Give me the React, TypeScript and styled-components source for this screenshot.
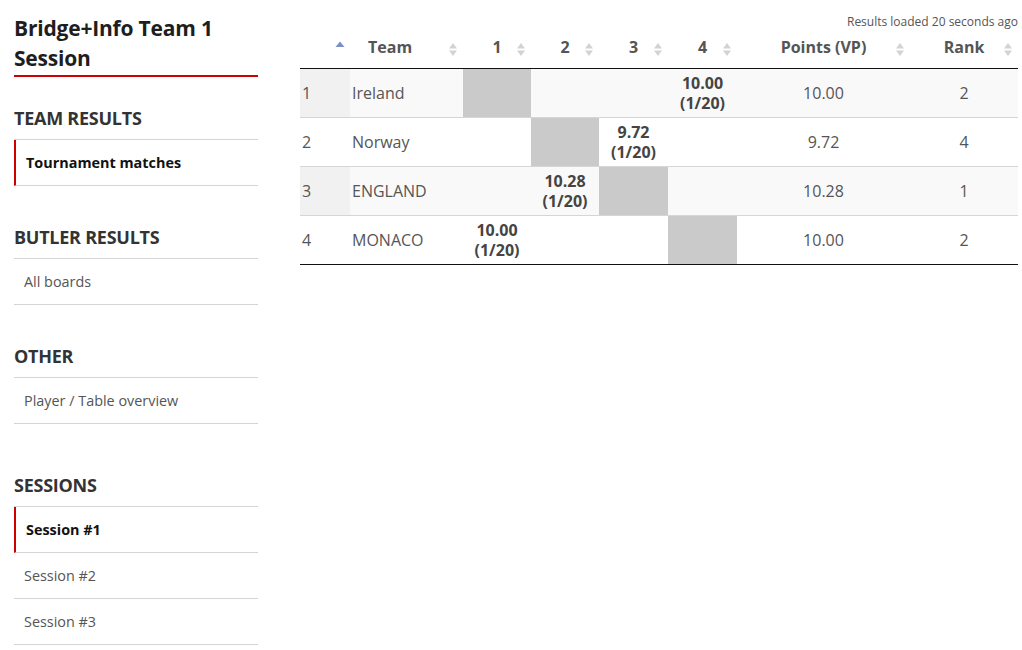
import React from "react";
import styled, { createGlobalStyle } from "styled-components";

const GlobalStyle = createGlobalStyle`
  html, body { margin: 0; padding: 0; background: #fff; }
  body { font-family: "Open Sans", "Liberation Sans", sans-serif; color: #555; }
  * { box-sizing: border-box; }
`;

const Page = styled.div`
  display: flex;
  align-items: flex-start;
  gap: 42px;
  padding: 0 4px 0 14px;
  width: 1022px;
`;

const Sidebar = styled.aside`
  width: 244px;
  flex: none;
  display: flex;
  flex-direction: column;
`;

const Title = styled.h1`
  margin: 13px 0 0;
  padding-bottom: 2px;
  font-size: 21px;
  line-height: 30px;
  font-weight: 700;
  color: #1e1e1e;
  letter-spacing: -0.2px;
  border-bottom: 2px solid #cc0000;
`;

const Section = styled.section<{ $extra?: number }>`
  margin-top: ${(p) => 38 + (p.$extra ?? 0)}px;
  &:first-of-type { margin-top: 28px; }
`;

const SectionHeading = styled.h2`
  margin: 0;
  height: 34px;
  font-size: 18px;
  line-height: 26px;
  font-weight: 700;
  color: #333;
  letter-spacing: -0.25px;
  text-transform: uppercase;
`;

const NavList = styled.ul`
  list-style: none;
  margin: 0;
  padding: 0;
  border-top: 1px solid #d4d4d4;
`;

const NavItem = styled.li<{ $active?: boolean }>`
  padding: 12px 10px;
  font-size: 14.4px;
  line-height: 21px;
  border-bottom: 1px solid #d4d4d4;
  border-left: ${(p) => (p.$active ? "2px solid #cc0000" : "none")};
  font-weight: ${(p) => (p.$active ? 700 : 400)};
  color: ${(p) => (p.$active ? "#111" : "#555")};
`;

const Main = styled.main`
  flex: 1;
  padding-top: 13px;
`;

const Loaded = styled.div`
  text-align: right;
  font-size: 12px;
  line-height: 18px;
  color: #555;
  margin-bottom: 1px;
`;

const Table = styled.table`
  width: 718px;
  table-layout: fixed;
  border-collapse: collapse;
  font-size: 16px;
`;

const Th = styled.th<{ $align?: string }>`
  position: relative;
  padding: 4px 8px 10px;
  padding-left: ${(p) => (p.$align === "left" ? "18px" : "8px")};
  text-align: ${(p) => p.$align ?? "center"};
  font-weight: 700;
  line-height: 22px;
  color: #555;
  border-bottom: 1px solid #111;
`;

const SortIcon = styled.svg`
  position: absolute;
  right: 5px;
  top: 9px;
`;

const Row = styled.tr<{ $odd: boolean }>`
  background: ${(p) => (p.$odd ? "#f9f9f9" : "#fff")};
  border-bottom: 1px solid #d6d6d6;
  &:last-child { border-bottom: 1px solid #111; }
`;

const Td = styled.td<{ $align?: string; $kind?: "self" | "score" }>`
  padding: 4px 2px;
  height: 48px;
  line-height: 20px;
  vertical-align: middle;
  text-align: ${(p) => p.$align ?? "center"};
  color: #555;
  ${(p) => p.$kind === "self" && `background: #cacaca;`}
  ${(p) => p.$kind === "score" && `font-weight: 700; color: #444;`}
`;

const IndexTd = styled(Td)<{ $odd: boolean }>`
  background: ${(p) => (p.$odd ? "#f1f1f1" : "#fff")};
`;

const SortBoth = () => (
  <SortIcon width="10" height="16" viewBox="0 0 10 16">
    <path d="M1 7.5 L5 2 L9 7.5 Z" fill="#d3d3d3" />
    <path d="M1 9.5 L5 15 L9 9.5 Z" fill="#d3d3d3" />
  </SortIcon>
);

const SortAsc = () => (
  <SortIcon width="10" height="16" viewBox="0 0 10 16">
    <path d="M0.5 6 L5 0.5 L9.5 6 Z" fill="#7a91c4" />
  </SortIcon>
);

type Team = { name: string; scores: (string | null)[]; vp: string; rank: number };

const teams: Team[] = [
  { name: "Ireland", scores: [null, "", "", "10.00|(1/20)"], vp: "10.00", rank: 2 },
  { name: "Norway", scores: ["", null, "9.72|(1/20)", ""], vp: "9.72", rank: 4 },
  { name: "ENGLAND", scores: ["", "10.28|(1/20)", null, ""], vp: "10.28", rank: 1 },
  { name: "MONACO", scores: ["10.00|(1/20)", "", "", null], vp: "10.00", rank: 2 },
];

const colWidths = [50, 113, 68, 68, 69, 69, 173, 108];

const sections: { title: string; items: { label: string; active?: boolean }[]; extra?: number }[] = [
  { title: "Team results", items: [{ label: "Tournament matches", active: true }] },
  { title: "Butler results", items: [{ label: "All boards" }] },
  { title: "Other", items: [{ label: "Player / Table overview" }] },
  {
    title: "Sessions",
    extra: 10,
    items: [{ label: "Session #1", active: true }, { label: "Session #2" }, { label: "Session #3" }],
  },
];

export default function App() {
  return (
    <>
      <GlobalStyle />
      <Page>
        <Sidebar>
          <Title>Bridge+Info Team 1 Session</Title>
          {sections.map((s) => (
            <Section key={s.title} $extra={s.extra}>
              <SectionHeading>{s.title}</SectionHeading>
              <NavList>
                {s.items.map((it) => (
                  <NavItem key={it.label} $active={it.active}>
                    {it.label}
                  </NavItem>
                ))}
              </NavList>
            </Section>
          ))}
        </Sidebar>
        <Main>
          <Loaded>Results loaded 20 seconds ago</Loaded>
          <Table>
            <colgroup>
              {colWidths.map((w, i) => (
                <col key={i} style={{ width: w }} />
              ))}
            </colgroup>
            <thead>
              <tr>
                <Th>
                  <SortAsc />
                </Th>
                <Th $align="left">
                  Team
                  <SortBoth />
                </Th>
                {["1", "2", "3", "4", "Points (VP)", "Rank"].map((h) => (
                  <Th key={h}>
                    {h}
                    <SortBoth />
                  </Th>
                ))}
              </tr>
            </thead>
            <tbody>
              {teams.map((t, i) => {
                const odd = i % 2 === 0;
                return (
                  <Row key={t.name} $odd={odd}>
                    <IndexTd $odd={odd} $align="left">
                      {i + 1}
                    </IndexTd>
                    <Td $align="left">{t.name}</Td>
                    {t.scores.map((s, j) =>
                      s === null ? (
                        <Td key={j} $kind="self" />
                      ) : (
                        <Td key={j} $kind="score">
                          {s
                            ? s.split("|").map((line, k) => (
                                <React.Fragment key={k}>
                                  {k > 0 && <br />}
                                  {line}
                                </React.Fragment>
                              ))
                            : null}
                        </Td>
                      )
                    )}
                    <Td>{t.vp}</Td>
                    <Td>{t.rank}</Td>
                  </Row>
                );
              })}
            </tbody>
          </Table>
        </Main>
      </Page>
    </>
  );
}
